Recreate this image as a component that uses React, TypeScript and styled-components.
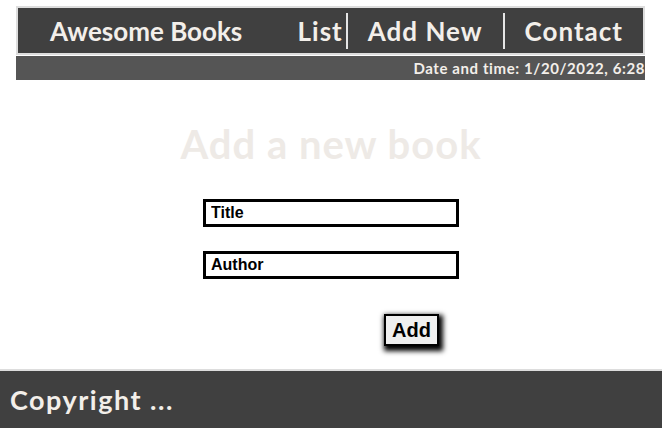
import styled, { createGlobalStyle } from 'styled-components'

const GlobalStyle = createGlobalStyle`
  html, body {
    margin: 0;
    padding: 0;
    background: #fff;
  }
  body {
    font-family: 'Comic Sans MS', 'Lato', sans-serif;
  }
`

const links = ['List', 'Add New', 'Contact']

export default function App() {
  return (
    <Page>
      <GlobalStyle />
      <Header>
        <Nav>
          <Brand>Awesome Books</Brand>
          <NavList>
            {links.map((label, i) => (
              <NavItem key={label} $first={i === 0}>
                {label}
              </NavItem>
            ))}
          </NavList>
        </Nav>
      </Header>
      <DateBar>
        <DateText>Date and time: 1/20/2022, 6:28</DateText>
      </DateBar>
      <Main>
        <Heading>Add a new book</Heading>
        <BookForm onSubmit={e => e.preventDefault()}>
          <Field type="text" placeholder="Title" />
          <Field type="text" placeholder="Author" />
          <AddButton type="submit">Add</AddButton>
        </BookForm>
      </Main>
      <Footer>Copyright ...</Footer>
    </Page>
  )
}

const Page = styled.div`
  min-height: 100vh;
  display: flex;
  flex-direction: column;
`

const Header = styled.header`
  margin: 6px 17px 0 16px;
  border: 2px solid #ddd;
  background: #404040;
`

const Nav = styled.nav`
  height: 45px;
  display: flex;
  align-items: center;
  padding-left: 32px;
`

const Brand = styled.div`
  color: #f3efea;
  font-weight: 700;
  font-size: 26px;
  width: 255px;
  white-space: nowrap;
`

const NavList = styled.ul`
  display: flex;
  align-items: center;
  list-style: none;
  margin: 0;
  padding: 0;
`

const NavItem = styled.li<{ $first?: boolean }>`
  color: #f3efea;
  font-weight: 700;
  font-size: 26px;
  letter-spacing: 1px;
  white-space: nowrap;
  height: 36px;
  line-height: 36px;
  padding: ${p => (p.$first ? '0 3px 0 0' : '0 20px')};
  border-left: ${p => (p.$first ? 'none' : '2px solid #e6e6e6')};
`

const DateBar = styled.div`
  margin: 1px 17px 0 16px;
  height: 24px;
  background: #555;
  overflow: hidden;
  display: flex;
  align-items: center;
  justify-content: flex-end;
`

const DateText = styled.span`
  color: #f3efea;
  font-weight: 700;
  font-size: 15px;
  letter-spacing: 0.6px;
  white-space: nowrap;
`

const Main = styled.main`
  display: flex;
  flex-direction: column;
  align-items: center;
`

const Heading = styled.h2`
  margin: 40px 0 0;
  color: #eeeae6;
  font-size: 40px;
  font-weight: 700;
  letter-spacing: 1px;
  line-height: 48px;
`

const BookForm = styled.form`
  width: 256px;
  margin-top: 31px;
  display: flex;
  flex-direction: column;
  gap: 24px;
`

const Field = styled.input`
  box-sizing: border-box;
  height: 28px;
  border: 3px solid #000;
  padding: 0 5px;
  font-family: 'Liberation Sans', Arial, sans-serif;
  font-weight: 700;
  font-size: 16px;
  outline: none;
  &::placeholder {
    color: #000;
    opacity: 1;
  }
`

const AddButton = styled.button`
  align-self: flex-start;
  margin: 11px 0 0 181px;
  box-sizing: border-box;
  height: 32px;
  padding: 0 6px;
  border: 2px solid #000;
  background: #efefef;
  font-family: 'Liberation Sans', Arial, sans-serif;
  font-weight: 700;
  font-size: 20px;
  color: #000;
  box-shadow: 2px 3px 5px 2px #000;
  cursor: pointer;
`

const Footer = styled.footer`
  margin-top: auto;
  border-top: 2px solid #ddd;
  background: #404040;
  height: 57px;
  display: flex;
  align-items: center;
  padding-left: 10px;
  color: #f3efea;
  font-weight: 700;
  font-size: 27px;
  letter-spacing: 1.5px;
`
